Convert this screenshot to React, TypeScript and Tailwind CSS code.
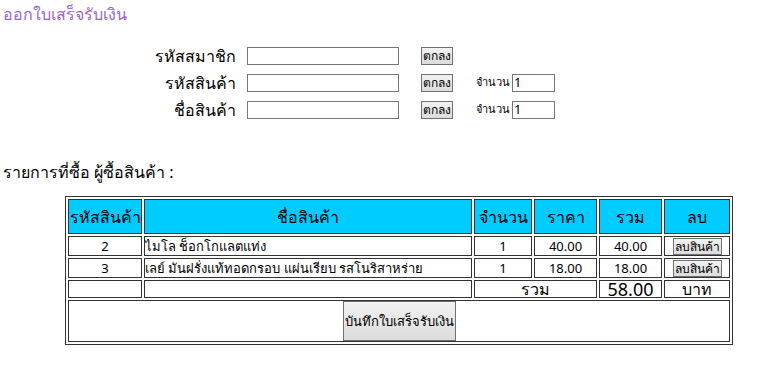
import React from "react";

const items = [
  { code: "2", name: "ไมโล ช็อกโกแลตแท่ง", qty: "1", price: "40.00", total: "40.00" },
  { code: "3", name: "เลย์ มันฝรั่งแท้ทอดกรอบ แผ่นเรียบ รสโนริสาหร่าย", qty: "1", price: "18.00", total: "18.00" },
];

const cell = "border border-[#333] p-0";
const head = "border border-[#333] bg-[#00ccff] text-[16px] font-normal h-[35px] text-center";
const btn =
  "border border-[#707070] bg-gradient-to-b from-[#f2f2f2] to-[#dcdcdc] text-[12px] leading-[15px] px-[1px] text-black";

function FormRow({ label, qty }: { label: string; qty?: boolean }) {
  return (
    <div className="flex h-[27px] items-center">
      <div className="w-[237px] pr-[1px] text-right text-[16px]">{label}</div>
      <input className="ml-[10px] h-[18px] w-[152px] border border-[#767676] bg-white" />
      <button className={`ml-[22px] h-[18px] ${btn}`}>ตกลง</button>
      {qty && (
        <>
          <span className="ml-[23px] text-[11px]">จำนวน</span>
          <input
            defaultValue="1"
            className="ml-[2px] h-[18px] w-[43px] border border-[#767676] bg-white px-[1px] text-[13px]"
          />
        </>
      )}
    </div>
  );
}

export default function App() {
  return (
    <div className="h-[371px] w-[779px] bg-white font-['Noto_Sans',sans-serif] text-black">
      <div className="pl-[3px] pt-[3px] text-[16px] font-medium leading-[22px] text-[#9966cc]">ออกใบเสร็จรับเงิน</div>

      <div className="mt-[17px]">
        <FormRow label="รหัสสมาชิก" />
        <FormRow label="รหัสสินค้า" qty />
        <FormRow label="ชื่อสินค้า" qty />
      </div>

      <div className="mt-[37px] pl-[3px] text-[16px] leading-[24px]">รายการที่ซื้อ ผู้ซื้อสินค้า :</div>

      <table className="ml-[65px] mt-[12px] w-[668px] border-separate border-spacing-[2px] border border-[#333] text-[13px]">
        <thead>
          <tr>
            <th className={`${head} w-[74px]`}>รหัสสินค้า</th>
            <th className={head}>ชื่อสินค้า</th>
            <th className={`${head} w-[58px]`}>จำนวน</th>
            <th className={`${head} w-[63px]`}>ราคา</th>
            <th className={`${head} w-[63px]`}>รวม</th>
            <th className={`${head} w-[66px]`}>ลบ</th>
          </tr>
        </thead>
        <tbody>
          {items.map((it) => (
            <tr key={it.code} className="h-[20px]">
              <td className={`${cell} text-center leading-[15px]`}>{it.code}</td>
              <td className={`${cell} text-left leading-[15px]`}>{it.name}</td>
              <td className={`${cell} text-center leading-[15px]`}>{it.qty}</td>
              <td className={`${cell} text-center leading-[15px]`}>{it.price}</td>
              <td className={`${cell} text-center leading-[15px]`}>{it.total}</td>
              <td className={`${cell} text-center leading-[15px]`}>
                <button className={`block mx-auto h-[17px] ${btn}`}>ลบสินค้า</button>
              </td>
            </tr>
          ))}
          <tr className="h-[18px]">
            <td className={cell}></td>
            <td className={cell}></td>
            <td className={`${cell} text-center text-[16px] leading-[14px]`} colSpan={2}>
              รวม
            </td>
            <td className={`${cell} text-center text-[18px] leading-[14px]`}>58.00</td>
            <td className={`${cell} text-center text-[16px] leading-[14px]`}>บาท</td>
          </tr>
          <tr className="h-[42px]">
            <td className={`${cell} text-center`} colSpan={6}>
              <button className={`h-[40px] align-middle px-[1px] ${btn} text-[13px]`}>บันทึกใบเสร็จรับเงิน</button>
            </td>
          </tr>
        </tbody>
      </table>
    </div>
  );
}
